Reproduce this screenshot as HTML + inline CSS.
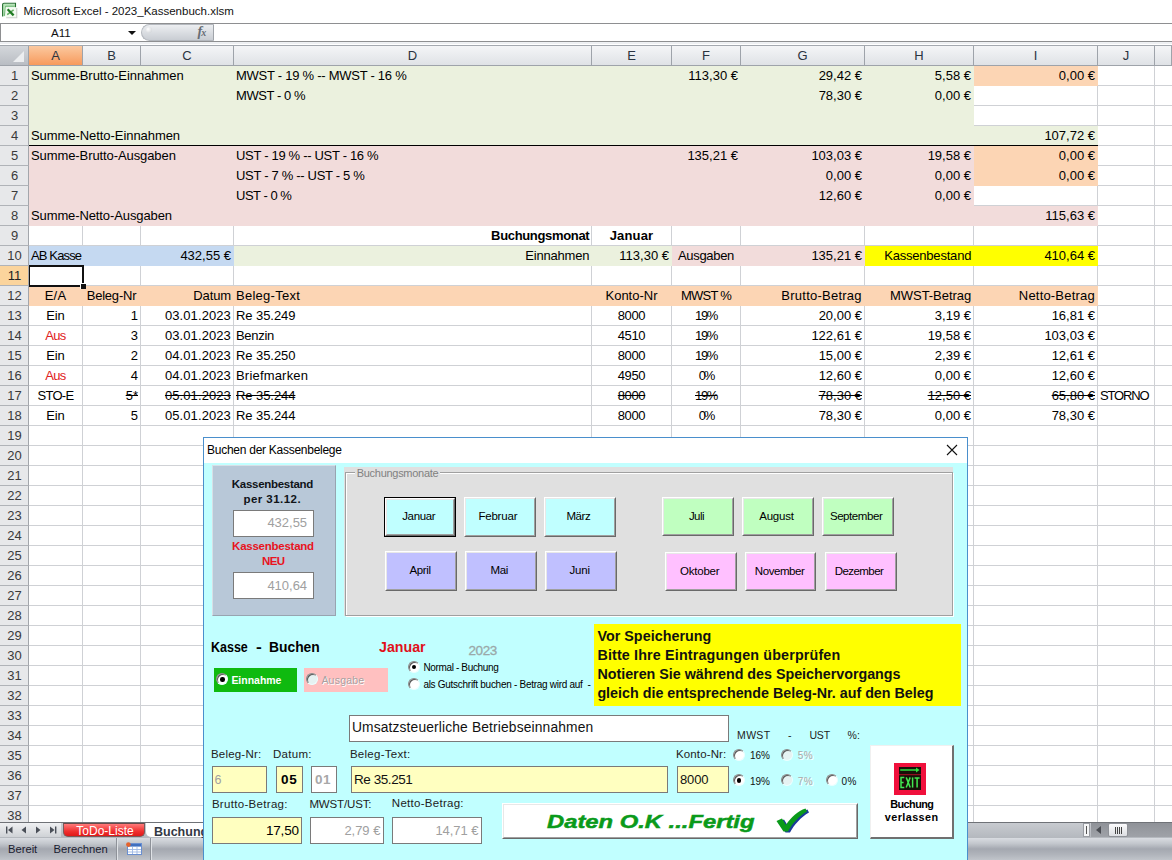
<!DOCTYPE html>
<html><head><meta charset="utf-8"><title>Kassenbuch</title>
<style>
html,body{margin:0;padding:0}
body{width:1172px;height:860px;overflow:hidden;position:relative;background:#fff;font-family:"Liberation Sans",sans-serif;font-size:13px;color:#111}
div{box-sizing:border-box}
#sheet{position:absolute;left:0;top:0;width:1172px;height:822px;overflow:hidden;
 background:
  linear-gradient(#cfd1d5,#cfd1d5) 82px 0/1px 100% no-repeat,
  linear-gradient(#cfd1d5,#cfd1d5) 140px 0/1px 100% no-repeat,
  linear-gradient(#cfd1d5,#cfd1d5) 233px 0/1px 100% no-repeat,
  linear-gradient(#cfd1d5,#cfd1d5) 591px 0/1px 100% no-repeat,
  linear-gradient(#cfd1d5,#cfd1d5) 671px 0/1px 100% no-repeat,
  linear-gradient(#cfd1d5,#cfd1d5) 740px 0/1px 100% no-repeat,
  linear-gradient(#cfd1d5,#cfd1d5) 864px 0/1px 100% no-repeat,
  linear-gradient(#cfd1d5,#cfd1d5) 973px 0/1px 100% no-repeat,
  linear-gradient(#cfd1d5,#cfd1d5) 1097px 0/1px 100% no-repeat,
  linear-gradient(#cfd1d5,#cfd1d5) 1154px 0/1px 100% no-repeat,
  repeating-linear-gradient(to bottom,#fff 0,#fff 19px,#cfd1d5 19px,#cfd1d5 20px) 0 66px/100% 20px,
  #fff}
.f{position:absolute}
.c{position:absolute;height:20px;line-height:20px;padding:0 3px 0 2px;white-space:pre;overflow:visible;font-size:13px;color:#000}
.rh{position:absolute;left:0;width:29px;height:20px;line-height:19px;text-align:center;font-size:13px;color:#3a3a3a;background:#e7e8ea;border-right:1px solid #a3a6ab;border-bottom:1px solid #b0b3b8;padding-left:1px}
.rh.sel{background:#fbd49c;color:#222}
.ch{position:absolute;top:46px;height:20px;line-height:19px;text-align:center;font-size:13px;color:#2b3440;background:linear-gradient(#f4f5f7,#dfe2e6);border-right:1px solid #9ea3aa;border-bottom:1px solid #9ea3aa}
.ch.sel{background:linear-gradient(#fbc9a0,#f79a5c)}
.abs{position:absolute}
.t{position:absolute;line-height:1;white-space:pre}

</style></head><body>
<div id="sheet">
<div class="f" style="left:29px;top:66.0px;width:945px;height:20px;background:#EBF1DE"></div>
<div class="f" style="left:974px;top:66.0px;width:124px;height:20px;background:#FCD5B4"></div>
<div class="f" style="left:29px;top:86.0px;width:945px;height:20px;background:#EBF1DE"></div>
<div class="f" style="left:29px;top:106.0px;width:945px;height:20px;background:#EBF1DE"></div>
<div class="f" style="left:29px;top:126.0px;width:1069px;height:20px;background:#EBF1DE"></div>
<div class="f" style="left:29px;top:146.0px;width:945px;height:20px;background:#F2DCDB"></div>
<div class="f" style="left:974px;top:146.0px;width:124px;height:20px;background:#FCD5B4"></div>
<div class="f" style="left:29px;top:166.0px;width:945px;height:20px;background:#F2DCDB"></div>
<div class="f" style="left:974px;top:166.0px;width:124px;height:20px;background:#FCD5B4"></div>
<div class="f" style="left:29px;top:186.0px;width:945px;height:20px;background:#F2DCDB"></div>
<div class="f" style="left:29px;top:206.0px;width:1069px;height:20px;background:#F2DCDB"></div>
<div class="f" style="left:29px;top:246.0px;width:205px;height:20px;background:#C5D9F1"></div>
<div class="f" style="left:234px;top:246.0px;width:438px;height:20px;background:#EBF1DE"></div>
<div class="f" style="left:672px;top:246.0px;width:193px;height:20px;background:#F2DCDB"></div>
<div class="f" style="left:865px;top:246.0px;width:233px;height:20px;background:#FFFF00"></div>
<div class="f" style="left:29px;top:286.0px;width:1069px;height:20px;background:#FCD5B4"></div>
<div class="f" style="left:29px;top:144.8px;width:1069px;height:1.5px;background:#000"></div>
<div class="c" style="left:29px;top:66.0px;width:54px;text-align:left;letter-spacing:-0.06px;">Summe-Brutto-Einnahmen</div>
<div class="c" style="left:234px;top:66.0px;width:358px;text-align:left;letter-spacing:-0.26px;">MWST - 19 % -- MWST - 16 %</div>
<div class="c" style="left:672px;top:66.0px;width:69px;text-align:right;">113,30 €</div>
<div class="c" style="left:741px;top:66.0px;width:124px;text-align:right;">29,42 €</div>
<div class="c" style="left:865px;top:66.0px;width:109px;text-align:right;">5,58 €</div>
<div class="c" style="left:974px;top:66.0px;width:124px;text-align:right;">0,00 €</div>
<div class="c" style="left:234px;top:86.0px;width:358px;text-align:left;letter-spacing:-0.43px;">MWST - 0 %</div>
<div class="c" style="left:741px;top:86.0px;width:124px;text-align:right;">78,30 €</div>
<div class="c" style="left:865px;top:86.0px;width:109px;text-align:right;">0,00 €</div>
<div class="c" style="left:29px;top:126.0px;width:54px;text-align:left;letter-spacing:-0.06px;">Summe-Netto-Einnahmen</div>
<div class="c" style="left:974px;top:126.0px;width:124px;text-align:right;">107,72 €</div>
<div class="c" style="left:29px;top:146.0px;width:54px;text-align:left;letter-spacing:-0.09px;">Summe-Brutto-Ausgaben</div>
<div class="c" style="left:234px;top:146.0px;width:358px;text-align:left;letter-spacing:-0.31px;">UST - 19 % -- UST - 16 %</div>
<div class="c" style="left:672px;top:146.0px;width:69px;text-align:right;">135,21 €</div>
<div class="c" style="left:741px;top:146.0px;width:124px;text-align:right;">103,03 €</div>
<div class="c" style="left:865px;top:146.0px;width:109px;text-align:right;">19,58 €</div>
<div class="c" style="left:974px;top:146.0px;width:124px;text-align:right;">0,00 €</div>
<div class="c" style="left:234px;top:166.0px;width:358px;text-align:left;letter-spacing:-0.31px;">UST - 7 % -- UST - 5 %</div>
<div class="c" style="left:741px;top:166.0px;width:124px;text-align:right;">0,00 €</div>
<div class="c" style="left:865px;top:166.0px;width:109px;text-align:right;">0,00 €</div>
<div class="c" style="left:974px;top:166.0px;width:124px;text-align:right;">0,00 €</div>
<div class="c" style="left:234px;top:186.0px;width:358px;text-align:left;letter-spacing:-0.49px;">UST - 0 %</div>
<div class="c" style="left:741px;top:186.0px;width:124px;text-align:right;">12,60 €</div>
<div class="c" style="left:865px;top:186.0px;width:109px;text-align:right;">0,00 €</div>
<div class="c" style="left:29px;top:206.0px;width:54px;text-align:left;letter-spacing:-0.11px;">Summe-Netto-Ausgaben</div>
<div class="c" style="left:974px;top:206.0px;width:124px;text-align:right;">115,63 €</div>
<div class="c" style="left:234px;top:226.0px;width:358px;text-align:right;letter-spacing:-0.33px;padding-right:2.67px;font-weight:bold">Buchungsmonat</div>
<div class="c" style="left:592px;top:226.0px;width:80px;text-align:center;letter-spacing:0.14px;font-weight:bold">Januar</div>
<div class="c" style="left:29px;top:246.0px;width:54px;text-align:left;letter-spacing:-0.86px;">AB Kasse</div>
<div class="c" style="left:141px;top:246.0px;width:93px;text-align:right;">432,55 €</div>
<div class="c" style="left:234px;top:246.0px;width:358px;text-align:right;letter-spacing:-0.20px;padding-right:2.80px;">Einnahmen</div>
<div class="c" style="left:592px;top:246.0px;width:80px;text-align:right;">113,30 €</div>
<div class="c" style="left:672px;top:246.0px;width:69px;text-align:left;letter-spacing:-0.32px;padding-left:6px">Ausgaben</div>
<div class="c" style="left:741px;top:246.0px;width:124px;text-align:right;">135,21 €</div>
<div class="c" style="left:865px;top:246.0px;width:109px;text-align:right;letter-spacing:-0.20px;padding-right:2.80px;">Kassenbestand</div>
<div class="c" style="left:974px;top:246.0px;width:124px;text-align:right;">410,64 €</div>
<div class="c" style="left:29px;top:286.0px;width:54px;text-align:center;letter-spacing:0.18px;">E/A</div>
<div class="c" style="left:83px;top:286.0px;width:58px;text-align:center;letter-spacing:-0.21px;">Beleg-Nr</div>
<div class="c" style="left:141px;top:286.0px;width:93px;text-align:right;letter-spacing:-0.08px;padding-right:2.92px;">Datum</div>
<div class="c" style="left:234px;top:286.0px;width:358px;text-align:left;letter-spacing:0.26px;">Beleg-Text</div>
<div class="c" style="left:592px;top:286.0px;width:80px;text-align:center;letter-spacing:-0.00px;">Konto-Nr</div>
<div class="c" style="left:672px;top:286.0px;width:69px;text-align:center;letter-spacing:-0.78px;">MWST %</div>
<div class="c" style="left:741px;top:286.0px;width:124px;text-align:right;letter-spacing:0.24px;padding-right:3.24px;">Brutto-Betrag</div>
<div class="c" style="left:865px;top:286.0px;width:109px;text-align:right;letter-spacing:-0.06px;padding-right:2.94px;">MWST-Betrag</div>
<div class="c" style="left:974px;top:286.0px;width:124px;text-align:right;letter-spacing:0.19px;padding-right:3.19px;">Netto-Betrag</div>
<div class="c" style="left:29px;top:306.0px;width:54px;text-align:center;letter-spacing:-0.13px;">Ein</div>
<div class="c" style="left:83px;top:306.0px;width:58px;text-align:right;">1</div>
<div class="c" style="left:141px;top:306.0px;width:93px;text-align:right;letter-spacing:0.09px;padding-right:3.09px;">03.01.2023</div>
<div class="c" style="left:234px;top:306.0px;width:358px;text-align:left;letter-spacing:-0.07px;">Re 35.249</div>
<div class="c" style="left:592px;top:306.0px;width:80px;text-align:center;letter-spacing:-0.36px;">8000</div>
<div class="c" style="left:672px;top:306.0px;width:69px;text-align:center;letter-spacing:-1.34px;">19%</div>
<div class="c" style="left:741px;top:306.0px;width:124px;text-align:right;">20,00 €</div>
<div class="c" style="left:865px;top:306.0px;width:109px;text-align:right;">3,19 €</div>
<div class="c" style="left:974px;top:306.0px;width:124px;text-align:right;">16,81 €</div>
<div class="c" style="left:29px;top:326.0px;width:54px;text-align:center;letter-spacing:-0.64px;color:#e02020">Aus</div>
<div class="c" style="left:83px;top:326.0px;width:58px;text-align:right;">3</div>
<div class="c" style="left:141px;top:326.0px;width:93px;text-align:right;letter-spacing:0.09px;padding-right:3.09px;">03.01.2023</div>
<div class="c" style="left:234px;top:326.0px;width:358px;text-align:left;letter-spacing:-0.31px;">Benzin</div>
<div class="c" style="left:592px;top:326.0px;width:80px;text-align:center;letter-spacing:-0.36px;">4510</div>
<div class="c" style="left:672px;top:326.0px;width:69px;text-align:center;letter-spacing:-1.34px;">19%</div>
<div class="c" style="left:741px;top:326.0px;width:124px;text-align:right;">122,61 €</div>
<div class="c" style="left:865px;top:326.0px;width:109px;text-align:right;">19,58 €</div>
<div class="c" style="left:974px;top:326.0px;width:124px;text-align:right;">103,03 €</div>
<div class="c" style="left:29px;top:346.0px;width:54px;text-align:center;letter-spacing:-0.13px;">Ein</div>
<div class="c" style="left:83px;top:346.0px;width:58px;text-align:right;">2</div>
<div class="c" style="left:141px;top:346.0px;width:93px;text-align:right;letter-spacing:0.09px;padding-right:3.09px;">04.01.2023</div>
<div class="c" style="left:234px;top:346.0px;width:358px;text-align:left;letter-spacing:-0.07px;">Re 35.250</div>
<div class="c" style="left:592px;top:346.0px;width:80px;text-align:center;letter-spacing:-0.36px;">8000</div>
<div class="c" style="left:672px;top:346.0px;width:69px;text-align:center;letter-spacing:-1.34px;">19%</div>
<div class="c" style="left:741px;top:346.0px;width:124px;text-align:right;">15,00 €</div>
<div class="c" style="left:865px;top:346.0px;width:109px;text-align:right;">2,39 €</div>
<div class="c" style="left:974px;top:346.0px;width:124px;text-align:right;">12,61 €</div>
<div class="c" style="left:29px;top:366.0px;width:54px;text-align:center;letter-spacing:-0.64px;color:#e02020">Aus</div>
<div class="c" style="left:83px;top:366.0px;width:58px;text-align:right;">4</div>
<div class="c" style="left:141px;top:366.0px;width:93px;text-align:right;letter-spacing:0.09px;padding-right:3.09px;">04.01.2023</div>
<div class="c" style="left:234px;top:366.0px;width:358px;text-align:left;letter-spacing:0.19px;">Briefmarken</div>
<div class="c" style="left:592px;top:366.0px;width:80px;text-align:center;letter-spacing:-0.36px;">4950</div>
<div class="c" style="left:672px;top:366.0px;width:69px;text-align:center;letter-spacing:-2.15px;">0%</div>
<div class="c" style="left:741px;top:366.0px;width:124px;text-align:right;">12,60 €</div>
<div class="c" style="left:865px;top:366.0px;width:109px;text-align:right;">0,00 €</div>
<div class="c" style="left:974px;top:366.0px;width:124px;text-align:right;">12,60 €</div>
<div class="c" style="left:29px;top:386.0px;width:54px;text-align:center;letter-spacing:-0.74px;">STO-E</div>
<div class="c" style="left:83px;top:386.0px;width:58px;text-align:right;text-decoration:line-through">5*</div>
<div class="c" style="left:141px;top:386.0px;width:93px;text-align:right;letter-spacing:0.09px;padding-right:3.09px;text-decoration:line-through">05.01.2023</div>
<div class="c" style="left:234px;top:386.0px;width:358px;text-align:left;letter-spacing:-0.07px;text-decoration:line-through">Re 35.244</div>
<div class="c" style="left:592px;top:386.0px;width:80px;text-align:center;letter-spacing:-0.36px;text-decoration:line-through">8000</div>
<div class="c" style="left:672px;top:386.0px;width:69px;text-align:center;letter-spacing:-1.34px;text-decoration:line-through">19%</div>
<div class="c" style="left:741px;top:386.0px;width:124px;text-align:right;text-decoration:line-through">78,30 €</div>
<div class="c" style="left:865px;top:386.0px;width:109px;text-align:right;text-decoration:line-through">12,50 €</div>
<div class="c" style="left:974px;top:386.0px;width:124px;text-align:right;text-decoration:line-through">65,80 €</div>
<div class="c" style="left:29px;top:406.0px;width:54px;text-align:center;letter-spacing:-0.13px;">Ein</div>
<div class="c" style="left:83px;top:406.0px;width:58px;text-align:right;">5</div>
<div class="c" style="left:141px;top:406.0px;width:93px;text-align:right;letter-spacing:0.09px;padding-right:3.09px;">05.01.2023</div>
<div class="c" style="left:234px;top:406.0px;width:358px;text-align:left;letter-spacing:-0.07px;">Re 35.244</div>
<div class="c" style="left:592px;top:406.0px;width:80px;text-align:center;letter-spacing:-0.36px;">8000</div>
<div class="c" style="left:672px;top:406.0px;width:69px;text-align:center;letter-spacing:-2.15px;">0%</div>
<div class="c" style="left:741px;top:406.0px;width:124px;text-align:right;">78,30 €</div>
<div class="c" style="left:865px;top:406.0px;width:109px;text-align:right;">0,00 €</div>
<div class="c" style="left:974px;top:406.0px;width:124px;text-align:right;">78,30 €</div>
<div class="c" style="left:1098px;top:386.0px;width:57px;text-align:left;letter-spacing:-1.15px;">STORNO</div>
<div class="f" style="left:27.5px;top:264.5px;width:56.5px;height:22.5px;border:2.6px solid #111"></div>
<div class="f" style="left:79.5px;top:282.5px;width:6px;height:6px;background:#111;border:1px solid #fff;border-right:none;border-bottom:none"></div>
<div class="rh" style="top:66.0px">1</div>
<div class="rh" style="top:86.0px">2</div>
<div class="rh" style="top:106.0px">3</div>
<div class="rh" style="top:126.0px">4</div>
<div class="rh" style="top:146.0px">5</div>
<div class="rh" style="top:166.0px">6</div>
<div class="rh" style="top:186.0px">7</div>
<div class="rh" style="top:206.0px">8</div>
<div class="rh" style="top:226.0px">9</div>
<div class="rh" style="top:246.0px">10</div>
<div class="rh sel" style="top:266.0px">11</div>
<div class="rh" style="top:286.0px">12</div>
<div class="rh" style="top:306.0px">13</div>
<div class="rh" style="top:326.0px">14</div>
<div class="rh" style="top:346.0px">15</div>
<div class="rh" style="top:366.0px">16</div>
<div class="rh" style="top:386.0px">17</div>
<div class="rh" style="top:406.0px">18</div>
<div class="rh" style="top:426.0px">19</div>
<div class="rh" style="top:446.0px">20</div>
<div class="rh" style="top:466.0px">21</div>
<div class="rh" style="top:486.0px">22</div>
<div class="rh" style="top:506.0px">23</div>
<div class="rh" style="top:526.0px">24</div>
<div class="rh" style="top:546.0px">25</div>
<div class="rh" style="top:566.0px">26</div>
<div class="rh" style="top:586.0px">27</div>
<div class="rh" style="top:606.0px">28</div>
<div class="rh" style="top:626.0px">29</div>
<div class="rh" style="top:646.0px">30</div>
<div class="rh" style="top:666.0px">31</div>
<div class="rh" style="top:686.0px">32</div>
<div class="rh" style="top:706.0px">33</div>
<div class="rh" style="top:726.0px">34</div>
<div class="rh" style="top:746.0px">35</div>
<div class="rh" style="top:766.0px">36</div>
<div class="rh" style="top:786.0px">37</div>
<div class="rh" style="top:806.0px">38</div>
<div class="ch sel" style="left:29px;width:54px">A</div>
<div class="ch" style="left:83px;width:58px">B</div>
<div class="ch" style="left:141px;width:93px">C</div>
<div class="ch" style="left:234px;width:358px">D</div>
<div class="ch" style="left:592px;width:80px">E</div>
<div class="ch" style="left:672px;width:69px">F</div>
<div class="ch" style="left:741px;width:124px">G</div>
<div class="ch" style="left:865px;width:109px">H</div>
<div class="ch" style="left:974px;width:124px">I</div>
<div class="ch" style="left:1098px;width:57px">J</div>
<div class="ch" style="left:1155px;width:17px"></div>
</div>
<!-- top chrome -->
<div class="abs" style="left:0;top:0;width:1172px;height:46px;background:#fff"></div>
<svg class="abs" style="left:0;top:0" width="22" height="22" viewBox="0 0 22 22">
  <path d="M6.2 17.6 H16.6 V8" fill="none" stroke="#c9cdc9" stroke-width="1.4"/>
  <path d="M3 4 H15.4 V7.4 H6 L5.2 16.2 H3 Z" fill="#b9e6ba"/>
  <path d="M2.6 16.6 V4.6 Q2.6 3.3 4 3.3 H15.5 V7.4" fill="none" stroke="#256f30" stroke-width="1.1"/>
  <path d="M4.4 15.8 L5.6 6.2 H14.8" fill="none" stroke="#5aa862" stroke-width="0.8"/>
  <rect x="5.6" y="7.3" width="10.6" height="10" fill="#f3fbf1"/>
  <path d="M13.6 9.8 L7.2 14.6" stroke="#62ad62" stroke-width="1.5" fill="none"/>
  <path d="M7.6 9.3 L13.6 15.4" stroke="#1f7a22" stroke-width="2.3" fill="none"/>
</svg>
<div class="abs" style="left:23.5px;top:3px;height:16px;line-height:16px;font-size:11.5px;color:#111;white-space:pre">Microsoft Excel - 2023_Kassenbuch.xlsm</div>
<!-- formula bar -->
<div class="abs" style="left:0;top:23px;width:1172px;height:1px;background:#8e8f91"></div>
<div class="abs" style="left:0;top:23px;width:1px;height:19px;background:#8e8f91"></div>
<div class="abs" style="left:0;top:41px;width:1172px;height:1px;background:#8e8f91"></div>
<div class="abs" style="left:0;top:42px;width:1172px;height:2px;background:#eef0f3"></div>
<div class="abs" style="left:0;top:44.6px;width:1172px;height:1.4px;background:#a4a9b0"></div>
<div class="abs" style="left:51px;top:25px;height:16px;line-height:16px;font-size:11.6px;color:#111">A11</div>
<div class="abs" style="left:127.5px;top:30.8px;width:0;height:0;border-left:4px solid transparent;border-right:4px solid transparent;border-top:4.2px solid #111"></div>
<div class="abs" style="left:141px;top:24px;width:73px;height:17px;border-radius:9px 0 0 9px;background:linear-gradient(#eceef1,#c9cdd3);border:1px solid #b4b8be;border-right:1px solid #a0a4aa"></div>
<div class="abs" style="left:146px;top:27px;width:6px;height:6px;border-radius:50%;background:radial-gradient(circle at 35% 35%,#fff,#c9ccd1)"></div>
<div class="abs" style="left:197.5px;top:23px;height:18px;line-height:18px;font-family:'Liberation Serif',serif;font-style:italic;font-weight:bold;font-size:14px;color:#676c74">f<span style="font-size:10px;font-weight:bold;margin-left:-1px">x</span></div>
<!-- select-all corner -->
<div class="abs" style="left:0;top:46px;width:29px;height:20px;background:linear-gradient(#d4d7db,#b9bdc3);border-right:1px solid #9ea3aa;border-bottom:1px solid #9ea3aa"></div>
<div class="abs" style="left:13px;top:51px;width:0;height:0;border-left:11px solid transparent;border-bottom:11px solid #eceef0"></div>
<!-- bottom: sheet tabs + scrollbar -->
<div class="abs" style="left:0;top:822px;width:1172px;height:16px;background:linear-gradient(#c9ccd1,#b4b8be)"></div>
<div class="abs" style="left:0;top:822px;width:1172px;height:1px;background:#6f7277"></div>
<div class="abs" style="left:0;top:823px;width:61px;height:14px;background:linear-gradient(#eff0f2,#cfd2d6)"></div>
<div class="abs" style="left:6px;top:825px;width:52px;height:11px;font-size:0">
 <svg width="52" height="11" viewBox="0 0 52 11"><g fill="#4a4f58">
  <rect x="0" y="1.5" width="1.4" height="7"/><path d="M6.5 1.5 L6.5 8.5 L2 5Z"/>
  <path d="M20 1.5 L20 8.5 L15.5 5Z"/>
  <path d="M30 1.5 L30 8.5 L34.5 5Z"/>
  <path d="M44 1.5 L44 8.5 L48.5 5Z"/><rect x="49" y="1.5" width="1.4" height="7"/></g></svg>
</div>
<div class="abs" style="left:146px;top:823px;width:70px;height:14px;background:#fff;border-radius:0 0 0 5px"></div>
<div class="abs" style="left:154px;top:823.5px;height:16px;line-height:16px;font-size:12.5px;font-weight:bold;color:#333844;white-space:pre">Buchung</div>
<div class="abs" style="left:63px;top:823px;width:82px;height:13.5px;background:linear-gradient(#ff7a7a,#f03030 60%,#e01818);border:1px solid #7a5a5a;border-top:1px solid #6a4a4a;border-radius:0 0 5px 5px"></div>
<div class="abs" style="left:63px;top:823px;width:82px;height:16px;line-height:16px;text-align:center;font-size:12px;color:#fff;white-space:pre;padding-left:2px">ToDo-Liste</div>
<!-- h-scrollbar bits -->
<div class="abs" style="left:1083px;top:823px;width:7px;height:14px;background:#f4f5f6;border:1px solid #9a9da3"></div>
<div class="abs" style="left:1086px;top:826px;width:1px;height:8px;background:#555"></div>
<div class="abs" style="left:1091px;top:823px;width:81px;height:14px;background:linear-gradient(#8f9298,#9fa2a8)"></div>
<div class="abs" style="left:1096px;top:826px;width:0;height:0;border-top:4px solid transparent;border-bottom:4px solid transparent;border-right:5px solid #4a4d53"></div>
<div class="abs" style="left:1108px;top:823px;width:20px;height:14px;background:linear-gradient(#fbfbfc,#dcdee2);border:1px solid #8e9197;border-radius:2px"></div>
<div class="abs" style="left:1115px;top:827px;width:7px;height:7px;background:repeating-linear-gradient(to right,#444 0,#444 1px,transparent 1px,transparent 2px)"></div>
<!-- status bar -->
<div class="abs" style="left:0;top:838px;width:1172px;height:22px;background:linear-gradient(#d9dce1 0,#c3c7cd 25%,#a4a8b0 50%,#b0b4bb 75%,#c0c4ca 100%)"></div>
<div class="abs" style="left:8px;top:841px;height:16px;line-height:16px;font-size:11.2px;color:#1a2030;white-space:pre">Bereit</div>
<div class="abs" style="left:53.5px;top:841px;height:16px;line-height:16px;font-size:11.2px;color:#1a2030;white-space:pre">Berechnen</div>
<div class="abs" style="left:116px;top:838px;width:1px;height:22px;background:#8e9299"></div>
<div class="abs" style="left:117px;top:838px;width:1px;height:22px;background:#dfe2e6"></div>
<div class="abs" style="left:150px;top:838px;width:1px;height:22px;background:#8e9299"></div>
<div class="abs" style="left:151px;top:838px;width:1px;height:22px;background:#dfe2e6"></div>
<svg class="abs" style="left:125px;top:841px" width="18" height="15" viewBox="0 0 18 15">
 <rect x="2.5" y="2.5" width="14" height="11" fill="#fff" stroke="#6a8fd0" stroke-width="1"/>
 <rect x="3" y="3" width="13" height="2.6" fill="#3f6fc0"/>
 <path d="M3 8.5 H16 M3 11 H16" stroke="#9db8e4" stroke-width="0.9"/><path d="M7.5 6 V13 M12 6 V13" stroke="#9db8e4" stroke-width="0.9"/>
 <circle cx="3.4" cy="3.6" r="2.3" fill="#e4622c"/>
</svg>

<div class="abs" style="left:203.0px;top:437.0px;width:765.0px;height:424.0px;background:#fff;border:1px solid #4a8fcc"></div>
<div class="abs" style="left:204.0px;top:463.0px;width:763.0px;height:398.0px;background:#C1FFFF"></div>
<div class="t" style="left:207.1px;top:444.4px;font-size:12px;font-weight:normal;color:#000;letter-spacing:-0.27px;">Buchen der Kassenbelege</div>
<svg class="abs" style="left:946px;top:444px" width="12" height="12" viewBox="0 0 12 12"><path d="M1 1 L11 11 M11 1 L1 11" stroke="#111" stroke-width="1.1" fill="none"/></svg>
<div class="abs" style="left:212.0px;top:465.0px;width:124.0px;height:150.8px;background:#B8C8D8;border:1px solid #d8dfe6;border-right-color:#98a4b0;border-bottom-color:#98a4b0"></div>
<div class="t" style="left:231.8px;top:478.5px;font-size:11.5px;font-weight:bold;color:#101418;letter-spacing:-0.29px;">Kassenbestand</div>
<div class="t" style="left:243.4px;top:493.7px;font-size:11.5px;font-weight:bold;color:#101418;letter-spacing:0.46px;">per 31.12.</div>
<div class="abs" style="left:233.0px;top:510.3px;width:81.0px;height:26.7px;background:#fff;border:1px solid #7a7a7a"></div>
<div class="t" style="left:267.4px;top:516.2px;font-size:13px;font-weight:normal;color:#a0a0a0;letter-spacing:-0.01px;">432,55</div>
<div class="t" style="left:232.1px;top:540.7px;font-size:11.5px;font-weight:bold;color:#e8141e;letter-spacing:-0.25px;">Kassenbestand</div>
<div class="t" style="left:262.1px;top:556.1px;font-size:11.5px;font-weight:bold;color:#e8141e;letter-spacing:-0.69px;">NEU</div>
<div class="abs" style="left:233.0px;top:572.0px;width:81.0px;height:26.7px;background:#fff;border:1px solid #7a7a7a"></div>
<div class="t" style="left:267.4px;top:578.6px;font-size:13px;font-weight:normal;color:#a0a0a0;letter-spacing:-0.01px;">410,64</div>
<div class="abs" style="left:344.0px;top:467.0px;width:609.0px;height:149.3px;background:#E0E0E0"></div>
<div class="abs" style="left:344.5px;top:472.0px;width:608.3px;height:144.0px;border:1px solid #a0a0a0;box-shadow:inset 1px 1px 0 #fff,1px 1px 0 #fff"></div>
<div class="abs" style="left:354.5px;top:467.0px;width:85.5px;height:12.0px;background:#E0E0E0"></div>
<div class="t" style="left:356.7px;top:468.4px;font-size:11px;font-weight:normal;color:#808080;letter-spacing:-0.28px;">Buchungsmonate</div>
<div class="abs" style="left:384.0px;top:496.6px;width:72.0px;height:40.2px;background:#000"></div>
<div class="abs" style="left:385.0px;top:497.6px;width:70.0px;height:38.2px;background:#C0FFFF;border-top:1px solid #fff;border-left:1px solid #fff;border-right:1px solid #696969;border-bottom:1px solid #696969"></div>
<div class="abs" style="left:386.0px;top:498.6px;width:68.0px;height:36.2px;background:#C0FFFF;border-right:1px solid #a0a0a0;border-bottom:1px solid #a0a0a0;border-top:1px solid #e8e8e8;border-left:1px solid #e8e8e8"></div>
<div class="t" style="left:402.2px;top:511.4px;font-size:11.5px;font-weight:normal;color:#000;letter-spacing:-0.33px;">Januar</div>
<div class="abs" style="left:463.8px;top:496.6px;width:72.2px;height:40.2px;background:#C0FFFF;border-top:1px solid #fff;border-left:1px solid #fff;border-right:1px solid #696969;border-bottom:1px solid #696969"></div>
<div class="abs" style="left:464.8px;top:497.6px;width:70.2px;height:38.2px;background:#C0FFFF;border-right:1px solid #a0a0a0;border-bottom:1px solid #a0a0a0;border-top:1px solid #e8e8e8;border-left:1px solid #e8e8e8"></div>
<div class="t" style="left:478.4px;top:511.4px;font-size:11.5px;font-weight:normal;color:#000;letter-spacing:-0.20px;">Februar</div>
<div class="abs" style="left:543.7px;top:496.6px;width:72.1px;height:40.2px;background:#C0FFFF;border-top:1px solid #fff;border-left:1px solid #fff;border-right:1px solid #696969;border-bottom:1px solid #696969"></div>
<div class="abs" style="left:544.7px;top:497.6px;width:70.1px;height:38.2px;background:#C0FFFF;border-right:1px solid #a0a0a0;border-bottom:1px solid #a0a0a0;border-top:1px solid #e8e8e8;border-left:1px solid #e8e8e8"></div>
<div class="t" style="left:566.4px;top:511.4px;font-size:11.5px;font-weight:normal;color:#000;letter-spacing:-0.39px;">März</div>
<div class="abs" style="left:384.6px;top:550.5px;width:72.4px;height:40.0px;background:#C0C0FF;border-top:1px solid #fff;border-left:1px solid #fff;border-right:1px solid #696969;border-bottom:1px solid #696969"></div>
<div class="abs" style="left:385.6px;top:551.5px;width:70.4px;height:38.0px;background:#C0C0FF;border-right:1px solid #a0a0a0;border-bottom:1px solid #a0a0a0;border-top:1px solid #e8e8e8;border-left:1px solid #e8e8e8"></div>
<div class="t" style="left:409.4px;top:565.2px;font-size:11.5px;font-weight:normal;color:#000;letter-spacing:-0.34px;">April</div>
<div class="abs" style="left:465.0px;top:550.5px;width:71.8px;height:40.0px;background:#C0C0FF;border-top:1px solid #fff;border-left:1px solid #fff;border-right:1px solid #696969;border-bottom:1px solid #696969"></div>
<div class="abs" style="left:466.0px;top:551.5px;width:69.8px;height:38.0px;background:#C0C0FF;border-right:1px solid #a0a0a0;border-bottom:1px solid #a0a0a0;border-top:1px solid #e8e8e8;border-left:1px solid #e8e8e8"></div>
<div class="t" style="left:490.4px;top:565.2px;font-size:11.5px;font-weight:normal;color:#000;letter-spacing:-0.34px;">Mai</div>
<div class="abs" style="left:545.2px;top:550.5px;width:71.7px;height:40.0px;background:#C0C0FF;border-top:1px solid #fff;border-left:1px solid #fff;border-right:1px solid #696969;border-bottom:1px solid #696969"></div>
<div class="abs" style="left:546.2px;top:551.5px;width:69.7px;height:38.0px;background:#C0C0FF;border-right:1px solid #a0a0a0;border-bottom:1px solid #a0a0a0;border-top:1px solid #e8e8e8;border-left:1px solid #e8e8e8"></div>
<div class="t" style="left:569.4px;top:565.2px;font-size:11.5px;font-weight:normal;color:#000;letter-spacing:-0.13px;">Juni</div>
<div class="abs" style="left:662.0px;top:496.5px;width:71.6px;height:39.5px;background:#C0FFC0;border-top:1px solid #fff;border-left:1px solid #fff;border-right:1px solid #696969;border-bottom:1px solid #696969"></div>
<div class="abs" style="left:663.0px;top:497.5px;width:69.6px;height:37.5px;background:#C0FFC0;border-right:1px solid #a0a0a0;border-bottom:1px solid #a0a0a0;border-top:1px solid #e8e8e8;border-left:1px solid #e8e8e8"></div>
<div class="t" style="left:688.9px;top:510.9px;font-size:11.5px;font-weight:normal;color:#000;letter-spacing:-0.57px;">Juli</div>
<div class="abs" style="left:742.0px;top:496.5px;width:71.8px;height:39.5px;background:#C0FFC0;border-top:1px solid #fff;border-left:1px solid #fff;border-right:1px solid #696969;border-bottom:1px solid #696969"></div>
<div class="abs" style="left:743.0px;top:497.5px;width:69.8px;height:37.5px;background:#C0FFC0;border-right:1px solid #a0a0a0;border-bottom:1px solid #a0a0a0;border-top:1px solid #e8e8e8;border-left:1px solid #e8e8e8"></div>
<div class="t" style="left:759.2px;top:510.9px;font-size:11.5px;font-weight:normal;color:#000;letter-spacing:-0.19px;">August</div>
<div class="abs" style="left:821.6px;top:496.5px;width:72.4px;height:39.5px;background:#C0FFC0;border-top:1px solid #fff;border-left:1px solid #fff;border-right:1px solid #696969;border-bottom:1px solid #696969"></div>
<div class="abs" style="left:822.6px;top:497.5px;width:70.4px;height:37.5px;background:#C0FFC0;border-right:1px solid #a0a0a0;border-bottom:1px solid #a0a0a0;border-top:1px solid #e8e8e8;border-left:1px solid #e8e8e8"></div>
<div class="t" style="left:829.9px;top:510.9px;font-size:11.5px;font-weight:normal;color:#000;letter-spacing:-0.42px;">September</div>
<div class="abs" style="left:664.6px;top:552.0px;width:72.4px;height:39.4px;background:#FFC0FF;border-top:1px solid #fff;border-left:1px solid #fff;border-right:1px solid #696969;border-bottom:1px solid #696969"></div>
<div class="abs" style="left:665.6px;top:553.0px;width:70.4px;height:37.4px;background:#FFC0FF;border-right:1px solid #a0a0a0;border-bottom:1px solid #a0a0a0;border-top:1px solid #e8e8e8;border-left:1px solid #e8e8e8"></div>
<div class="t" style="left:679.9px;top:566.4px;font-size:11.5px;font-weight:normal;color:#000;letter-spacing:-0.20px;">Oktober</div>
<div class="abs" style="left:744.8px;top:552.0px;width:71.7px;height:39.4px;background:#FFC0FF;border-top:1px solid #fff;border-left:1px solid #fff;border-right:1px solid #696969;border-bottom:1px solid #696969"></div>
<div class="abs" style="left:745.8px;top:553.0px;width:69.7px;height:37.4px;background:#FFC0FF;border-right:1px solid #a0a0a0;border-bottom:1px solid #a0a0a0;border-top:1px solid #e8e8e8;border-left:1px solid #e8e8e8"></div>
<div class="t" style="left:754.8px;top:566.4px;font-size:11.5px;font-weight:normal;color:#000;letter-spacing:-0.43px;">November</div>
<div class="abs" style="left:824.7px;top:552.0px;width:72.0px;height:39.4px;background:#FFC0FF;border-top:1px solid #fff;border-left:1px solid #fff;border-right:1px solid #696969;border-bottom:1px solid #696969"></div>
<div class="abs" style="left:825.7px;top:553.0px;width:70.0px;height:37.4px;background:#FFC0FF;border-right:1px solid #a0a0a0;border-bottom:1px solid #a0a0a0;border-top:1px solid #e8e8e8;border-left:1px solid #e8e8e8"></div>
<div class="t" style="left:834.7px;top:566.4px;font-size:11.5px;font-weight:normal;color:#000;letter-spacing:-0.55px;">Dezember</div>
<div class="abs" style="left:593.8px;top:624.0px;width:367.0px;height:81.6px;background:#FFFF00"></div>
<div class="t" style="left:597.4px;top:628.7px;font-size:14.3px;font-weight:bold;color:#111;letter-spacing:0.04px;">Vor Speicherung</div>
<div class="t" style="left:597.4px;top:647.7px;font-size:14.3px;font-weight:bold;color:#111;letter-spacing:0.16px;">Bitte Ihre Eintragungen überprüfen</div>
<div class="t" style="left:597.4px;top:666.7px;font-size:14.3px;font-weight:bold;color:#111;letter-spacing:-0.01px;">Notieren Sie während des Speichervorgangs</div>
<div class="t" style="left:597.4px;top:685.7px;font-size:14.3px;font-weight:bold;color:#111;letter-spacing:-0.00px;">gleich die entsprechende Beleg-Nr. auf den Beleg</div>
<div class="t" style="left:210.9px;top:640.4px;font-size:14px;font-weight:bold;color:#000;transform-origin:0 50%;transform:scaleX(0.892);">Kasse</div>
<div class="t" style="left:255.6px;top:640.4px;font-size:14px;font-weight:bold;color:#000;transform-origin:0 50%;transform:scaleX(1.241);">-</div>
<div class="t" style="left:268.9px;top:640.4px;font-size:14px;font-weight:bold;color:#000;transform-origin:0 50%;transform:scaleX(0.989);">Buchen</div>
<div class="t" style="left:378.8px;top:640.4px;font-size:14px;font-weight:bold;color:#e0101a;transform-origin:0 50%;transform:scaleX(1.015);">Januar</div>
<div class="t" style="left:468.4px;top:643.6px;font-size:13.5px;font-weight:normal;color:#9aa8a8;letter-spacing:-0.36px;-webkit-text-stroke:0.3px #9aa8a8">2023</div>
<div class="abs" style="left:214.0px;top:667.8px;width:82.8px;height:23.9px;background:#0FBA0F"></div>
<div class="abs" style="left:216.2px;top:673.3px;width:12px;height:12px;border-radius:50%;background:#fff;border:1px solid;border-color:#8a8a8a #eaffff #eaffff #8a8a8a;box-shadow:inset 1px 1px 0 #5a5a5a"></div>
<div class="abs" style="left:220.2px;top:677.3px;width:4.4px;height:4.4px;border-radius:50%;background:#000"></div>
<div class="t" style="left:231.4px;top:675.2px;font-size:10.5px;font-weight:bold;color:#fff;letter-spacing:-0.02px;">Einnahme</div>
<div class="abs" style="left:304.0px;top:667.8px;width:84.0px;height:23.9px;background:#FFC0C0"></div>
<div class="abs" style="left:306.2px;top:673.3px;width:12px;height:12px;border-radius:50%;background:#e6f2f2;border:1px solid;border-color:#8a8a8a #eaffff #eaffff #8a8a8a;box-shadow:inset 1px 1px 0 #5a5a5a"></div>
<div class="t" style="left:321.4px;top:675.2px;font-size:10.5px;font-weight:normal;color:#a9a0a0;letter-spacing:0.22px;text-shadow:1px 1px 0 #fff">Ausgabe</div>
<div class="abs" style="left:407.5px;top:660.8px;width:12px;height:12px;border-radius:50%;background:#fff;border:1px solid;border-color:#8a8a8a #eaffff #eaffff #8a8a8a;box-shadow:inset 1px 1px 0 #5a5a5a"></div>
<div class="abs" style="left:411.5px;top:664.8px;width:4.4px;height:4.4px;border-radius:50%;background:#000"></div>
<div class="t" style="left:423.4px;top:662.9px;font-size:10px;font-weight:normal;color:#000;letter-spacing:-0.35px;">Normal - Buchung</div>
<div class="abs" style="left:407.5px;top:677.8px;width:12px;height:12px;border-radius:50%;background:#fff;border:1px solid;border-color:#8a8a8a #eaffff #eaffff #8a8a8a;box-shadow:inset 1px 1px 0 #5a5a5a"></div>
<div class="t" style="left:423.4px;top:679.9px;font-size:10px;font-weight:normal;color:#000;letter-spacing:-0.28px;">als Gutschrift buchen - Betrag wird auf  -</div>
<div class="abs" style="left:349.0px;top:715.0px;width:379.8px;height:26.5px;background:#fff;border:1px solid #7a7a7a"></div>
<div class="t" style="left:351.9px;top:721.0px;font-size:13.8px;font-weight:normal;color:#111;letter-spacing:0.15px;">Umsatzsteuerliche Betriebseinnahmen</div>
<div class="t" style="left:737.1px;top:730.2px;font-size:10.5px;font-weight:normal;color:#222;letter-spacing:0.31px;">MWST</div>
<div class="t" style="left:787.9px;top:730.2px;font-size:10.5px;font-weight:normal;color:#222;letter-spacing:1.00px;">-</div>
<div class="t" style="left:809.4px;top:730.2px;font-size:10.5px;font-weight:normal;color:#222;letter-spacing:-0.17px;">UST</div>
<div class="t" style="left:847.4px;top:730.2px;font-size:10.5px;font-weight:normal;color:#222;letter-spacing:0.37px;">%:</div>
<div class="t" style="left:210.9px;top:748.7px;font-size:11.5px;font-weight:normal;color:#222;letter-spacing:0.21px;">Beleg-Nr:</div>
<div class="t" style="left:272.9px;top:748.7px;font-size:11.5px;font-weight:normal;color:#222;letter-spacing:0.32px;">Datum:</div>
<div class="t" style="left:349.9px;top:748.7px;font-size:11.5px;font-weight:normal;color:#222;letter-spacing:0.27px;">Beleg-Text:</div>
<div class="t" style="left:676.0px;top:748.7px;font-size:11.5px;font-weight:normal;color:#222;letter-spacing:0.13px;">Konto-Nr:</div>
<div class="abs" style="left:211.5px;top:766.2px;width:55.3px;height:26.6px;background:#FFFFC0;border:1px solid #7a7a7a"></div>
<div class="t" style="left:214.4px;top:773.6px;font-size:12.5px;font-weight:normal;color:#a0a0a0;letter-spacing:0.05px;">6</div>
<div class="abs" style="left:276.0px;top:766.2px;width:26.6px;height:26.6px;background:#FFFFC0;border:1px solid #7a7a7a"></div>
<div class="t" style="left:280.9px;top:773.1px;font-size:13.5px;font-weight:bold;color:#000;letter-spacing:0.73px;">05</div>
<div class="abs" style="left:311.0px;top:766.2px;width:25.8px;height:26.6px;background:#fff;border:1px solid #7a7a7a"></div>
<div class="t" style="left:314.9px;top:773.1px;font-size:13.5px;font-weight:bold;color:#a8a8a8;letter-spacing:0.48px;">01</div>
<div class="abs" style="left:351.0px;top:766.2px;width:316.7px;height:26.6px;background:#FFFFC0;border:1px solid #7a7a7a"></div>
<div class="t" style="left:353.9px;top:773.1px;font-size:13.5px;font-weight:normal;color:#111;letter-spacing:-0.42px;">Re 35.251</div>
<div class="abs" style="left:677.3px;top:766.3px;width:51.7px;height:26.5px;background:#FFFFC0;border:1px solid #7a7a7a"></div>
<div class="t" style="left:679.9px;top:772.9px;font-size:13px;font-weight:normal;color:#111;letter-spacing:-0.11px;">8000</div>
<div class="abs" style="left:733.0px;top:749.0px;width:12px;height:12px;border-radius:50%;background:#fff;border:1px solid;border-color:#8a8a8a #eaffff #eaffff #8a8a8a;box-shadow:inset 1px 1px 0 #5a5a5a"></div>
<div class="t" style="left:750.0px;top:751.4px;font-size:10px;font-weight:normal;color:#111;letter-spacing:-0.04px;">16%</div>
<div class="abs" style="left:781.0px;top:749.0px;width:12px;height:12px;border-radius:50%;background:#e6f2f2;border:1px solid;border-color:#8a8a8a #eaffff #eaffff #8a8a8a;box-shadow:inset 1px 1px 0 #5a5a5a"></div>
<div class="t" style="left:797.8px;top:751.4px;font-size:10px;font-weight:normal;color:#a8a8a8;letter-spacing:0.32px;text-shadow:1px 1px 0 #fff">5%</div>
<div class="abs" style="left:733.0px;top:774.4px;width:12px;height:12px;border-radius:50%;background:#fff;border:1px solid;border-color:#8a8a8a #eaffff #eaffff #8a8a8a;box-shadow:inset 1px 1px 0 #5a5a5a"></div>
<div class="abs" style="left:737.0px;top:778.4px;width:4.4px;height:4.4px;border-radius:50%;background:#000"></div>
<div class="t" style="left:750.0px;top:776.9px;font-size:10px;font-weight:normal;color:#111;letter-spacing:-0.04px;">19%</div>
<div class="abs" style="left:781.0px;top:774.4px;width:12px;height:12px;border-radius:50%;background:#e6f2f2;border:1px solid;border-color:#8a8a8a #eaffff #eaffff #8a8a8a;box-shadow:inset 1px 1px 0 #5a5a5a"></div>
<div class="t" style="left:797.8px;top:776.9px;font-size:10px;font-weight:normal;color:#a8a8a8;letter-spacing:0.32px;text-shadow:1px 1px 0 #fff">7%</div>
<div class="abs" style="left:825.5px;top:774.4px;width:12px;height:12px;border-radius:50%;background:#fff;border:1px solid;border-color:#8a8a8a #eaffff #eaffff #8a8a8a;box-shadow:inset 1px 1px 0 #5a5a5a"></div>
<div class="t" style="left:841.4px;top:776.9px;font-size:10px;font-weight:normal;color:#111;letter-spacing:0.52px;">0%</div>
<div class="t" style="left:211.9px;top:799.0px;font-size:11.5px;font-weight:normal;color:#222;letter-spacing:0.31px;">Brutto-Betrag:</div>
<div class="t" style="left:309.4px;top:799.0px;font-size:11.5px;font-weight:normal;color:#222;letter-spacing:-0.14px;">MWST/UST:</div>
<div class="t" style="left:391.8px;top:797.7px;font-size:11.5px;font-weight:normal;color:#222;letter-spacing:0.28px;">Netto-Betrag:</div>
<div class="abs" style="left:212.0px;top:817.3px;width:89.6px;height:26.7px;background:#FFFFC0;border:1px solid #7a7a7a"></div>
<div class="t" style="left:265.9px;top:824.1px;font-size:13.5px;font-weight:normal;color:#000;letter-spacing:-0.16px;">17,50</div>
<div class="abs" style="left:310.0px;top:817.3px;width:73.9px;height:26.7px;background:#fff;border:1px solid #7a7a7a"></div>
<div class="t" style="left:344.4px;top:824.4px;font-size:13px;font-weight:normal;color:#a0a0a0;letter-spacing:-0.03px;">2,79 €</div>
<div class="abs" style="left:392.4px;top:817.3px;width:89.4px;height:26.7px;background:#fff;border:1px solid #7a7a7a"></div>
<div class="t" style="left:435.4px;top:824.4px;font-size:13px;font-weight:normal;color:#a0a0a0;letter-spacing:-0.05px;">14,71 €</div>
<div class="abs" style="left:502.0px;top:803.0px;width:356.0px;height:36.2px;background:#fff;border-top:1px solid #fff;border-left:1px solid #fff;border-right:1px solid #696969;border-bottom:1px solid #696969"></div>
<div class="abs" style="left:503.0px;top:804.0px;width:354.0px;height:34.2px;background:#fff;border-right:1px solid #a0a0a0;border-bottom:1px solid #a0a0a0;border-top:1px solid #e8e8e8;border-left:1px solid #e8e8e8"></div>
<div class="t" style="left:547.4px;top:811.8px;font-size:19px;font-weight:bold;color:#0a9a1a;transform-origin:0 50%;transform:scaleX(1.252);font-style:italic;-webkit-text-stroke:0.5px #0a9a1a">Daten O.K ...Fertig</div>
<svg class="abs" style="left:775px;top:807px" width="36" height="27" viewBox="0 0 36 27"><path d="M3.5 15 L9 12.5 L13 19 C18 11 25 5 32.5 2.5 L34 5.5 C26 10 19 18 15 25.5 L10.5 25.5 Z" fill="#1a3a9a"/><path d="M1.5 14 L7 11.5 L11 18 C16 10 23 4 30.5 1.5 L32 4.5 C24 9 17 17 13 24.5 L8.5 24.5 Z" fill="#0a9a1a"/></svg>
<div class="abs" style="left:870.3px;top:745.0px;width:84.0px;height:94.0px;background:#fff;border-top:1px solid #f0f0f0;border-left:1px solid #f0f0f0;border-right:2px solid #707070;border-bottom:2px solid #707070"></div>
<div class="abs" style="left:894.0px;top:763.0px;width:32.0px;height:31.7px;background:#f0103c"></div>
<div class="abs" style="left:898.8px;top:767.2px;width:22.3px;height:23.2px;background:#181008"></div>
<svg class="abs" style="left:898.8px;top:767.2px" width="22.3" height="23.2" viewBox="0 0 22.3 23.2"><path d="M1.2 3 H18.5" stroke="#30e040" stroke-width="1.5" fill="none"/><path d="M17 0.6 L20.6 3 L17 5.4Z" fill="#30e040"/><path d="M0 7.7 H22.3" stroke="#d01030" stroke-width="0.8"/><g stroke="#40e850" stroke-width="1.5" fill="none"><path d="M5.3 10.6 H2 V20.4 H5.3 M2 15.5 H4.6"/><path d="M7.2 10.4 L11.2 20.6 M11.2 10.4 L7.2 20.6"/><path d="M13.6 10.4 V20.6"/><path d="M15.6 11 H20.6 M18.1 11 V20.6"/></g></svg>
<div class="t" style="left:890.2px;top:799.3px;font-size:10.8px;font-weight:bold;color:#000;letter-spacing:-0.51px;">Buchung</div>
<div class="t" style="left:884.8px;top:811.5px;font-size:10.8px;font-weight:bold;color:#000;letter-spacing:0.43px;">verlassen</div>
</body></html>
